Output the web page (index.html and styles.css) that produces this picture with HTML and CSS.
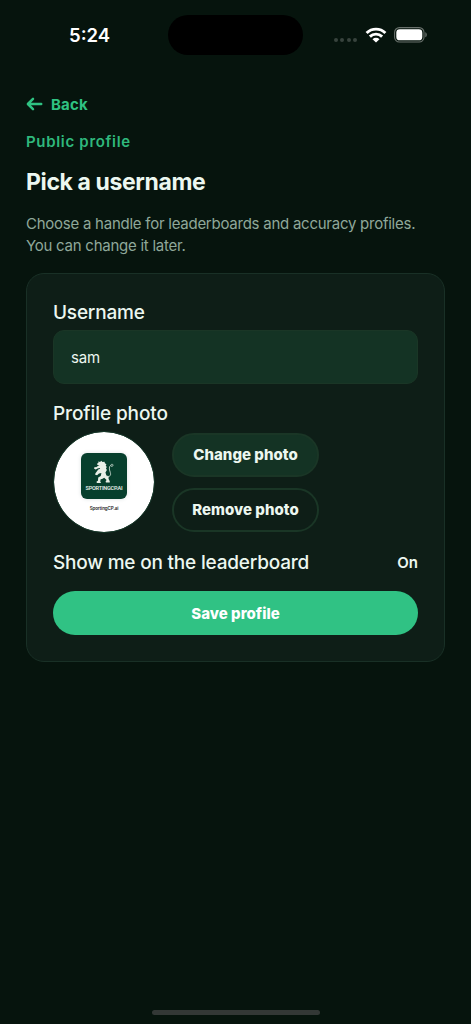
FILE: index.html
```html
<!DOCTYPE html>
<html lang="en">
<head>
    <meta charset="UTF-8">
    <meta name="viewport" content="width=device-width, initial-scale=1.0">
    <title>Public profile</title>
    <link rel="stylesheet" href="styles.css">
</head>
<body>
    <div class="status-bar">
        <div class="time">5:24</div>
        <div class="island"></div>
        <div class="status-icons">
            <div class="signal"><i></i><i></i><i></i><i></i></div>
            <svg class="wifi" width="22" height="16" viewBox="0 0 22 16" fill="none" stroke="#fff" stroke-width="2.9">
                <path d="M1.6 6a13.3 13.3 0 0 1 18.8 0"/>
                <path d="M4.900 9.600a8.700 8.700 0 0 1 12.200 0"/>
                <path d="M11 15.600l-3.500-3.400a5 5 0 0 1 7 0z" fill="#fff" stroke="none"/>
            </svg>
            <svg class="battery" width="34" height="16" viewBox="0 0 34 16">
                <rect x=".6" y=".6" width="29.4" height="14.4" rx="4.8" fill="none" stroke="#69716c" stroke-width="1.1"/>
                <rect x="2.3" y="2.3" width="26" height="11" rx="3.4" fill="#fff"/>
                <path d="M31.3 5.300c2 .6 2 4.400 0 5z" fill="#69716c"/>
            </svg>
        </div>
    </div>

    <main class="page">
        <a class="back" href="#">
            <svg width="17" height="14" viewBox="0 0 17 14" fill="none" stroke="currentColor" stroke-width="2.5" stroke-linecap="round" stroke-linejoin="round">
                <path d="M15.200 7H2M7 1.900L1.900 7L7 12.100"/>
            </svg>
            <span>Back</span>
        </a>
        <p class="eyebrow">Public profile</p>
        <h1>Pick a username</h1>
        <p class="intro">Choose a handle for leaderboards and accuracy profiles.<br>You can change it later.</p>

        <form class="card">
            <label class="label" for="username">Username</label>
            <input class="input" id="username" type="text" value="sam">
            <div class="label photo-label">Profile photo</div>
            <div class="photo-row">
                <div class="avatar">
                    <div class="logo">
                        <svg width="22" height="25" viewBox="0 0 22 26" fill="#e9efe7">
                            <path d="M5 1.500L7 2l1-1.200L9.500 2l2-.3L12 3.500l1.500.8-.7 1.700 1.200 1.200-1 1.300 1 2-1.500 2.500 1 3 2.500 1-.3 2.500L17 22v1.500h-4l-.3-1.300 1-1.500-2.500-2.200-2.200 1.300-1.500.3-.4 2.300.8 1.500H3.500l-.2-1.500 1.400-.7.3-3.500 2.600-1.500.7-3.200-2.500.5-2 1.800-2-.5.3-1.500L3.500 12 5 9.800l2-.6-.4-.9-2.400.6-1.700 1L.7 9l.5-1.600 1.600.1L5 6l1.400-.6-2.100-.2-.7-1.300 1.600-.7z"/>
                            <path d="M13.500 17c4 .8 5-1.400 4-4.200-1.300-3.500-1.400-6 .6-7.200M18 6c0-2 2.600-2.200 2.300-.3-.3 1.200-1.500 1.300-2.300.3z" fill="none" stroke="#cbdad0" stroke-width=".9"/>
                        </svg>
                        <span>SPORTINGCP.AI</span>
                    </div>
                    <div class="caption">SportingCP.ai</div>
                </div>
                <div class="photo-actions">
                    <button type="button" class="btn btn-filled">Change photo</button>
                    <button type="button" class="btn btn-outline">Remove photo</button>
                </div>
            </div>
            <div class="toggle-row">
                <span class="label toggle-label">Show me on the leaderboard</span>
                <span class="toggle-value">On</span>
            </div>
            <button type="button" class="btn btn-save">Save profile</button>
        </form>
    </main>

    <div class="home-bar"></div>
</body>
</html>
```

FILE: styles.css
```css
* {
    box-sizing: border-box;
}
body {
    margin: 0;
    height: 1024px;
    display: flex;
    flex-direction: column;
    background-color: #06140d;
    color: #ecf7f0;
    font-family: Inter, "Liberation Sans", sans-serif;
    overflow: hidden;
}
p, h1 {
    margin: 0;
}

/* status bar */
.status-bar {
    display: grid;
    grid-template-columns: 168px 135px 1fr;
    align-items: center;
    height: 40px;
    margin-top: 15px;
}
.time {
    padding-left: 69px;
    color: #fff;
    font-size: 18.5px;
    font-weight: 600;
    line-height: 40px;
}
.island {
    height: 40px;
    border-radius: 20px;
    background-color: #000;
}
.status-icons {
    display: flex;
    align-items: center;
    padding-left: 31px;
}
.signal {
    display: flex;
    gap: 2.4px;
    margin-top: 10px;
}
.signal i {
    width: 4px;
    height: 4px;
    border-radius: 50%;
    background-color: #38433d;
}
.wifi {
    margin-left: 8px;
    margin-top: -1px;
}
.battery {
    margin-left: 7px;
}

/* page header */
.page {
    padding: 38px 26px 0;
}
.back {
    display: flex;
    align-items: center;
    gap: 8px;
    height: 22px;
    color: #2fc282;
    font-size: 15px;
    font-weight: 700;
    letter-spacing: 0.2px;
    text-decoration: none;
}
.eyebrow {
    margin-top: 16px;
    color: #2fb87c;
    font-size: 15px;
    font-weight: 600;
    line-height: 22px;
    letter-spacing: 0.68px;
}
h1 {
    margin-top: 14px;
    font-size: 23px;
    font-weight: 700;
    line-height: 30px;
    letter-spacing: -0.38px;
}
.intro {
    margin-top: 16px;
    color: #8fa89a;
    font-size: 15px;
    line-height: 22px;
    letter-spacing: -0.25px;
}

/* profile card */
.card {
    display: flex;
    flex-direction: column;
    height: 389px;
    margin-top: 16px;
    padding: 26px 26px 25px;
    border: 1px solid #193026;
    border-radius: 18px;
    background-color: #0e1e17;
}
.label {
    font-size: 19px;
    font-weight: 500;
    line-height: 26px;
    letter-spacing: -0.2px;
}
.input {
    width: 100%;
    height: 54px;
    margin-top: 4px;
    padding: 0 17px;
    border: 1px solid #1a3626;
    border-radius: 11px;
    background-color: #143324;
    color: #ecf7f0;
    font: 400 15px Inter, sans-serif;
    letter-spacing: -0.2px;
    outline: none;
}
.photo-label {
    margin-top: 17px;
    letter-spacing: -0.1px;
}
.photo-row {
    display: flex;
    align-items: center;
    gap: 17px;
    margin-top: 4px;
}
.avatar {
    display: flex;
    flex-direction: column;
    align-items: center;
    width: 102px;
    height: 102px;
    padding-top: 21px;
    border: 1px solid #17382a;
    border-radius: 50%;
    background-color: #fff;
    background-clip: padding-box;
    color: #222;
}
.logo {
    display: flex;
    flex-direction: column;
    align-items: center;
    width: 46px;
    height: 46px;
    padding-top: 7px;
    border-radius: 6px;
    background-color: #073f2d;
    box-shadow: 0 0 4px #dde2e2;
    color: #e4eee8;
}
.logo span {
    font-family: Roboto, sans-serif;
    font-size: 5.5px;
    font-weight: 600;
    line-height: 7px;
    letter-spacing: -0.2px;
}
.caption {
    margin-top: 6px;
    font-size: 4.5px;
    font-weight: 600;
    line-height: 7px;
    letter-spacing: -0.1px;
}
.photo-actions {
    display: flex;
    flex-direction: column;
    gap: 11px;
}
.btn {
    height: 44px;
    padding: 0;
    border: 0;
    border-radius: 22px;
    color: #ecf7f0;
    font: 800 15px Inter, sans-serif;
    letter-spacing: 0.02px;
}
.btn-filled, .btn-outline {
    width: 147px;
    border: 2px solid #1a3626;
}
.btn-filled {
    background-color: #143324;
}
.btn-outline {
    background-color: transparent;
}
.toggle-row {
    display: flex;
    align-items: center;
    justify-content: space-between;
    margin-top: 17px;
}
.toggle-value {
    margin-top: -2px;
    font-size: 15px;
    font-weight: 600;
}
.btn-save {
    margin-top: 15px;
    background-color: #30c284;
    color: #fff;
}

.home-bar {
    width: 168px;
    height: 5px;
    margin: auto auto 9px;
    border-radius: 3px;
    background-color: #333836;
}
```
